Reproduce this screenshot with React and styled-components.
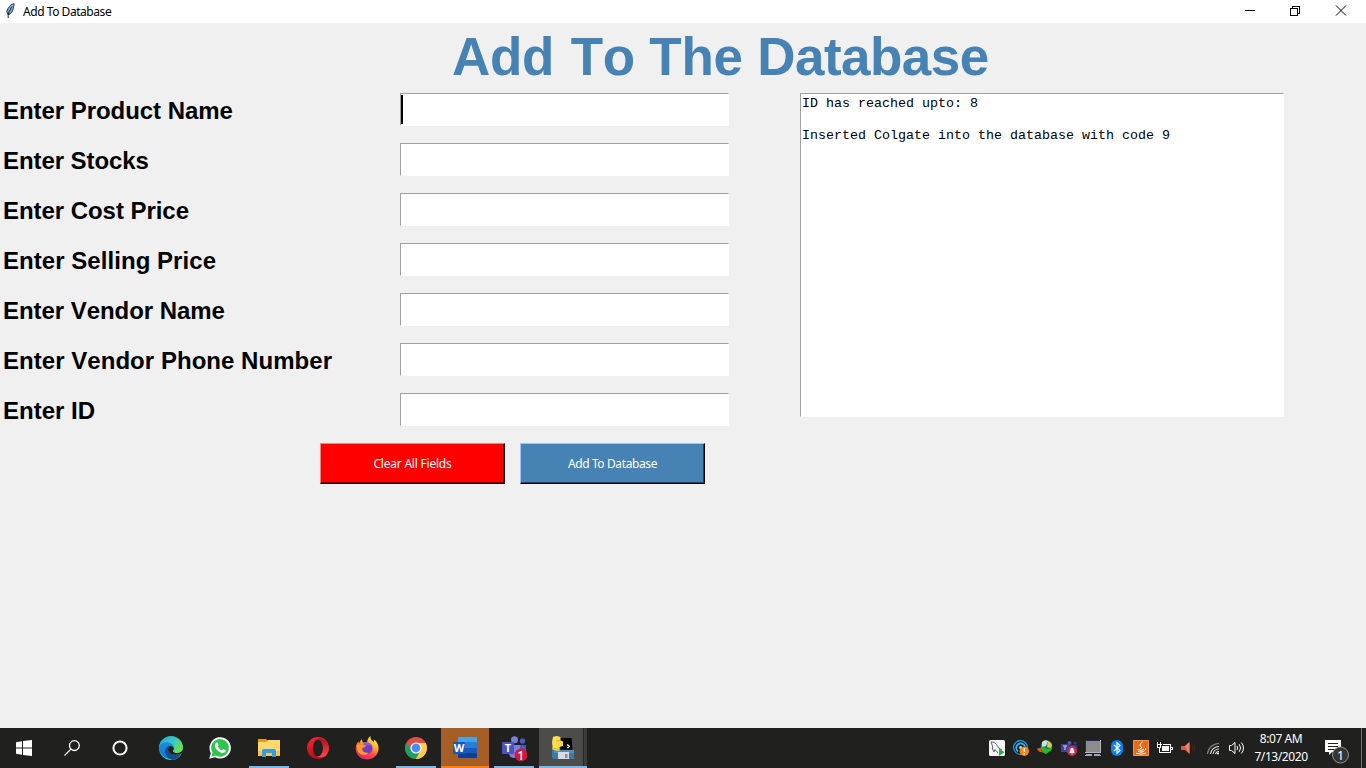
import React from "react";
import styled, { createGlobalStyle, css } from "styled-components";

const GlobalStyle = createGlobalStyle`
  * { box-sizing: border-box; }
  body { margin: 0; background: #f0f0f0; overflow: hidden; }
`;

const uiFont = css`
  font-family: "Noto Sans", "Open Sans", sans-serif;
  font-size: 12px;
`;

const Screen = styled.div`
  width: 1366px;
  height: 768px;
  display: flex;
  flex-direction: column;
  background: #f0f0f0;
`;

const TitleBar = styled.header`
  ${uiFont}
  height: 23px;
  flex: none;
  display: flex;
  background: #fff;
  color: #000;
`;

const FeatherSlot = styled.div`
  width: 23px;
  padding: 2px 0 0 4px;
  line-height: 0;
`;

const WindowTitle = styled.div`
  flex: 1;
  line-height: 23px;
  letter-spacing: -0.45px;
`;

const WindowControls = styled.div`
  display: flex;
  padding-right: 1px;
`;

const ControlButton = styled.div`
  width: ${(p) => p.$width || 48}px;
  height: 21px;
  display: flex;
  align-items: center;
  justify-content: center;
`;

const Content = styled.main`
  flex: 1;
  display: flex;
  flex-direction: column;
`;

const Heading = styled.h1`
  margin: 0;
  height: 70px;
  padding: 4px 0 0 452px;
  font: bold 53px/60px "Liberation Sans", Arial, sans-serif;
  letter-spacing: -0.27px;
  font-kerning: none;
  color: #4682b4;
  white-space: nowrap;
`;

const HeadingWord = styled.span`
  margin-right: ${(p) => p.$gap || 0}px;
  letter-spacing: ${(p) => p.$spacing || -0.27}px;
`;

const Columns = styled.div`
  display: flex;
  gap: 71px;
`;

const Form = styled.div`
  width: 729px;
`;

const FieldRow = styled.div`
  height: 50px;
  display: grid;
  grid-template-columns: 397px 329px;
  padding-left: 3px;
  align-items: start;
`;

const Label = styled.label`
  font: bold 24px/36px "Liberation Sans", Arial, sans-serif;
  font-kerning: none;
  letter-spacing: ${(p) => p.$spacing}px;
  color: #000;
  white-space: nowrap;
`;

const Entry = styled.div`
  height: 33px;
  background: #fff;
  border: 1px solid;
  border-color: #a0a0a0 #fff #fff #a0a0a0;
  padding-top: 1px;
`;

const Caret = styled.div`
  width: 2px;
  height: 29px;
  background: #000;
`;

const Output = styled.div`
  width: 484px;
  height: 324px;
  background: #fff;
  border: 1px solid;
  border-color: #a0a0a0 #fff #fff #a0a0a0;
  padding: 2px 1px;
  font: 13.333px/16px "Liberation Mono", "Courier New", monospace;
  color: #000;
  white-space: pre;
`;

const Actions = styled.div`
  display: flex;
  gap: 15px;
  padding-left: 320px;
`;

const ActionButton = styled.button`
  ${uiFont}
  width: 185px;
  height: 41px;
  padding: 0 0 1px;
  border: 1px solid;
  border-color: ${(p) => p.$light} #000 #000 ${(p) => p.$light};
  box-shadow: inset -1px -1px 0 ${(p) => p.$dark};
  background: ${(p) => p.$color};
  color: #fff;
  letter-spacing: ${(p) => p.$spacing}px;
`;

const Taskbar = styled.footer`
  ${uiFont}
  height: 40px;
  flex: none;
  display: flex;
  background: #20201f;
  color: #fff;
`;

const SystemButton = styled.div`
  width: 48px;
  height: 40px;
  display: flex;
  align-items: center;
  justify-content: center;
`;

const AppList = styled.div`
  display: flex;
  gap: 1px;
  padding-left: 3px;
`;

const appStates = {
  idle: css``,
  open: css`
    &::after { content: ""; position: absolute; left: 4px; right: 4px; bottom: 0; height: 2px; background: #76b9ed; }
  `,
  alert: css`
    background: #a75e24;
    &::after { content: ""; position: absolute; left: 0; right: 0; bottom: 0; height: 2px; background: #ff7d08; }
  `,
  active: css`
    background: linear-gradient(90deg, #4c4c4b 0 44px, #272726 44px 45px, #3d3d3c 45px);
    &::after { content: ""; position: absolute; left: 0; right: 0; bottom: 0; height: 2px; background: #76b9ed; }
  `,
};

const AppButton = styled.div`
  position: relative;
  width: 48px;
  height: 40px;
  display: flex;
  align-items: center;
  justify-content: center;
  ${(p) => appStates[p.$state]}
`;

const Tray = styled.div`
  display: flex;
  margin-left: auto;
`;

const TrayIcon = styled.div`
  width: 24px;
  height: 40px;
  display: flex;
  align-items: center;
  justify-content: center;
`;

const Clock = styled.div`
  width: 64px;
  padding-top: 2px;
  line-height: 18px;
  text-align: center;
  letter-spacing: -0.42px;
  white-space: nowrap;
`;

const Notifications = styled.div`
  width: 48px;
  height: 40px;
  padding: 10px 0 0 12px;
  line-height: 0;
`;

const DesktopEdge = styled.div`
  width: 5px;
  border-left: 1px solid #747474;
`;

const Icon = ({ size = 24, children, ...rest }) => (
  <svg width={size} height={size} viewBox={`0 0 ${size} ${size}`} {...rest}>{children}</svg>
);

const Feather = () => (
  <svg width="13" height="17" viewBox="0 0 13 17">
    <path d="M10 1.500 7 2.800 4 6.400 2.800 9.200 3.700 12.600 6 12.200 8 10 9.300 6.700 10 3Z" fill="#6fa3df" stroke="#2a3340" strokeWidth=".9" />
    <path d="M9 3 6.200 6.400 4.700 10" stroke="#b6dcff" strokeWidth=".8" fill="none" />
    <path d="M8 4.500 5.200 9.200 4.200 13.200V16" stroke="#111" strokeWidth=".9" fill="none" />
  </svg>
);

const WindowsLogo = () => (
  <Icon size={16} fill="#fff">
    <path d="M0 2.2 6 1.3V7.5H0ZM7 1.1 16 0V7.5H7ZM0 8.5H6V14.7L0 13.8ZM7 8.5H16V16L7 14.9Z" />
  </Icon>
);

const SearchIcon = () => (
  <Icon size={16} fill="none" stroke="#fff" strokeWidth="1.3">
    <circle cx="10.4" cy="5.6" r="4.9" />
    <path d="M6.9 9.1 .5 15.5" />
  </Icon>
);

const CortanaIcon = () => (
  <Icon size={16}><circle cx="8" cy="8" r="6.6" fill="none" stroke="#fff" strokeWidth="2" /></Icon>
);

const EdgeIcon = () => (
  <Icon size={24}>
    <defs>
      <linearGradient id="edgeTop" x1="0" y1="0" x2="1" y2=".45">
        <stop offset="0" stopColor="#28a9d8" /><stop offset=".55" stopColor="#35c5d0" /><stop offset="1" stopColor="#67df55" />
      </linearGradient>
      <linearGradient id="edgeBody" x1="0" y1="0" x2="0" y2="1">
        <stop offset="0" stopColor="#1a8edb" /><stop offset="1" stopColor="#1173cf" />
      </linearGradient>
    </defs>
    <circle cx="12" cy="12" r="12" fill="url(#edgeTop)" />
    <path d="M0 12C.3 7 5 5.8 8.5 6.2c4 .4 6.300 3 6.500 6-.4-1.200-1.700-2.200-3.200-2.200-2 0-3.200 1.800-3 3.700.3 3.700 4.400 6 8 5.500 2.200-.2 4-1.100 5.400-2A12 12 0 0 1 0 12Z" fill="url(#edgeBody)" />
    <path d="M11 9.700c-3 .4-5 3-4.800 6C6.500 20 10 23 13.500 23.900c3.700-.4 7-2.900 8.700-6.600.1-.5-.3-.5-.6-.3-5.800 3.200-12.200.8-12.800-3.400-.1-1.600.8-3.200 2.200-3.900Z" fill="#124d95" />
    <path d="M11.700 10c1.700 0 3.200 1.300 3.200 3 0 1-1.300 1.500-.8 2.500.8 1.600 4 1.800 6.100.9 2.200-.9 3.800-2.400 3.800-4.500v5.300l-3 .5c-5.500 2.300-11.600.2-12-4-.1-2 1-3.700 2.700-3.700Z" fill="#20201f" />
    <path d="M12 2c6 0 11.500 3.700 11.900 9.500.2 3-1.800 4.800-4.500 5.100-2.700.4-5-.5-5.300-1.700 3.200-3.500-.3-8.400-5.300-8.900C5 5.500 1.500 7 .3 10 1 5 6 2 12 2Z" fill="url(#edgeTop)" />
  </Icon>
);

const WhatsAppIcon = () => (
  <Icon size={22}>
    <path d="M.2 21.800 1.800 16A10.700 10.700 0 1 1 6.100 20.300Z" fill="#fff" />
    <path d="M2.300 19.700 3.500 15.500A8.800 8.800 0 1 1 6.600 18.500Z" fill="#2cc64f" />
    <path d="M7.500 5.500c.6-.2 1.100 0 1.300.5l.8 1.900c.1.400-.8 1.200-.8 1.600.8 1.800 2.300 3.100 4.100 3.800.5-.2 1-1.300 1.500-1.200l2 1c.4.200.4.800.1 1.500-.6 1.200-2.200 1.700-3.400 1.400C9 15 6 11.600 5.900 8.500c0-1.400.8-2.600 1.600-3Z" fill="#fff" />
  </Icon>
);

const ExplorerIcon = () => (
  <Icon size={22}>
    <path d="M0 2H8L10 4H21V8H0Z" fill="#dfa000" />
    <path d="M0 5H8L10 3H22V19H0Z" fill="#ffd86b" />
    <path d="M0 14H22V19H0Z" fill="#f4c453" />
    <path d="M4 20V14Q4 12 6 12H16Q18 12 18 14V20H14V16H8V20Z" fill="#379be0" />
  </Icon>
);

const OperaIcon = () => (
  <Icon size={22}>
    <defs>
      <linearGradient id="operaRing" x1="0" y1="0" x2=".3" y2="1"><stop stopColor="#ff2634" /><stop offset="1" stopColor="#b70b1b" /></linearGradient>
      <linearGradient id="operaSide" x1="0" y1="0" x2="0" y2="1"><stop stopColor="#a90f1d" /><stop offset="1" stopColor="#ff4b50" /></linearGradient>
    </defs>
    <path fillRule="evenodd" d="M11 0a11 11 0 1 0 0 22a11 11 0 1 0 0-22ZM11 2.500C14 2.500 16 6.500 16 11S14 19.500 11 19.500 6 15.500 6 11 8 2.500 11 2.500Z" fill="url(#operaRing)" />
    <path d="M8.800 3C12.500 0 17 2 19 4.500 23.500 9 22.500 15 18.500 19 15.500 20.500 12 21 9.200 19.200 13.500 20.500 16 16 16 11S13.500 1.500 8.800 3Z" fill="url(#operaSide)" />
  </Icon>
);

const FirefoxIcon = () => (
  <Icon size={24}>
    <defs>
      <linearGradient id="fox" x1=".8" y1="0" x2=".3" y2="1">
        <stop stopColor="#fff04a" /><stop offset=".35" stopColor="#ffb52f" /><stop offset=".65" stopColor="#ff5038" /><stop offset="1" stopColor="#e91a7a" />
      </linearGradient>
    </defs>
    <path d="M15.500 0c-.5 3 1 4 3.200 6 .3-1.200.3-1.800.1-2.500C22 5.500 24 9.200 23.500 13.500 22.800 19.500 18 23.500 12 23.500S1 19 .7 13C.5 9.700 2 7 3.600 5.200L4 7.500 6.500 3 8 6.700c2-.5 3-.3 4-.1.200-2.600 1.300-5 3.500-6.600Z" fill="url(#fox)" />
    <circle cx="12.200" cy="12.600" r="5.300" fill="#753bc6" />
    <path d="M1.500 9C5 7.500 7.500 9.200 10.500 9.300c1.100.1.500 1.400-1 2-1 .4-2.200.5-2.300 2 0 2.500 3.200 4.300 6.300 3.200C10.500 21 3 18.500 2 13Z" fill="#ff9f26" />
    <path d="M8 6.700c4-1.700 8.500.2 9.800 4-1.700-1.500-3-1.500-4.500-1.400L10.500 9.300Z" fill="#9657da" />
  </Icon>
);

const ChromeIcon = () => (
  <Icon size={24}>
    <circle cx="12" cy="12" r="11" fill="#dd5144" />
    <path d="M12 7H21.800A11 11 0 0 1 11.700 23L16.300 14.500Z" fill="#ffcd46" />
    <path d="M2.300 6.800A11 11 0 0 0 11.700 23L16.300 14.500 7.700 14.500Z" fill="#1aa15f" />
    <circle cx="12" cy="12" r="5.600" fill="#fff" />
    <circle cx="12" cy="12" r="4.400" fill="#4c8bf5" />
  </Icon>
);

const WordIcon = () => (
  <Icon size={24}>
    <path d="M6 1H23Q24 1 24 2V7H5V2Q5 1 6 1Z" fill="#41a5ee" />
    <path d="M5 6H24V12H5Z" fill="#2b7cd3" />
    <path d="M5 12H24V17H5Z" fill="#185abd" />
    <path d="M5 17H24V21Q24 22 23 22H6Q5 22 5 21Z" fill="#103f91" />
    <rect y="6" width="12" height="12" rx="1" fill="#185abd" />
    <text x="6" y="16" textAnchor="middle" fill="#fff" fontFamily="Open Sans, sans-serif" fontWeight="700" fontSize="11">W</text>
  </Icon>
);

const TeamsIcon = () => (
  <svg width="26" height="34" viewBox="0 -4 26 34">
    <circle cx="13.500" cy="4.800" r="3.500" fill="#7980dd" /><circle cx="21.500" cy="6" r="2.700" fill="#5058bb" />
    <path d="M17 10H25V16Q25 21 20 21H17Z" fill="#5058bb" />
    <path d="M8 10H19V18Q19 23 13.500 23T8 18Z" fill="#7980dd" />
    <rect x="1" y="7" width="12" height="12" rx="1" fill="#4b53bc" />
    <text x="7" y="16.900" textAnchor="middle" fill="#fff" fontFamily="Open Sans, sans-serif" fontWeight="700" fontSize="11">T</text>
    <circle cx="20" cy="20" r="6.500" fill="#d0193c" />
    <text x="19.900" y="24.500" textAnchor="middle" fill="#fff" fontFamily="Noto Sans, sans-serif" fontWeight="500" fontSize="12.500">1</text>
  </svg>
);

const PythonIcon = () => (
  <Icon size={24}>
    <path d="M1 12 3 14H23V23H2L1 21Z" fill="#397ba9" />
    <path d="M3 14H23V17H3Z" fill="#4c92c3" />
    <path d="M7 16H18V23H7Z" fill="#d8dce0" /><rect x="14" y="18" width="2.500" height="4" fill="#8b9096" />
    <path d="M8 1.500H21L22 14H9Z" fill="#050505" stroke="#777" strokeWidth=".4" />
    <path d="m16 8.500 2.500 1.700-2.200 2" stroke="#fff" strokeWidth="1.100" fill="none" />
    <path d="M2 .8 6 0 9.500 1V4.500L12 5.500V10L8.500 11V15L5 14.500 1.500 13.500V10L1 6Z" fill="#ffdb4a" />
    <path d="M5.500 4.800H9.500M3 12.300 7.500 13.300" stroke="#dda923" strokeWidth=".9" /><circle cx="4.500" cy="3" r=".6" fill="#fff6bb" />
  </Icon>
);

const MySqlIcon = () => (
  <Icon size={16}>
    <rect width="16" height="16" rx="1.500" fill="#f5f5f5" />
    <path d="M2 2C5 1.500 8 4 9.500 8L13 10M2 2C3 5 4 6 3.500 9L5 12 6 9.500 9 13" fill="none" stroke="#59666f" strokeWidth="1" />
    <path d="M10 8.500 15.500 12.300 10 16Z" fill="#20b14b" />
  </Icon>
);

const SyncIcon = () => (
  <Icon size={16}>
    <circle cx="7.500" cy="7.500" r="6.900" fill="#061d2c" stroke="#1ba7e5" strokeWidth="1.200" />
    <path d="M5 11.500A4.500 4.500 0 1 1 12 6.500" fill="none" stroke="#27b9f4" strokeWidth="1.700" />
    <circle cx="7.600" cy="7.600" r="1.500" fill="#9deaff" />
    <circle cx="11.300" cy="11.300" r="4.700" fill="#ff850a" />
    <path d="M11.300 8.200V12M11.300 13V14.500" stroke="#fff" strokeWidth="1.400" />
  </Icon>
);

const IdmIcon = () => (
  <Icon size={16}>
    <circle cx="9.500" cy="6" r="5.800" fill="#2867a9" />
    <path d="M5 2Q8-1 11 1L9 6 5 7Z" fill="#c3e8da" /><path d="M11 .8Q14 2 15 5L14 8 10 7Z" fill="#d9d43b" />
    <path d="M3 8 6 6.500 9.500 9 15.500 7.500 14 10.500 9 14 6 12.500Z" fill="#25bb18" />
    <path d="M0 9Q3 7 6 8L3.500 9.500 6 12.500Q1 12 0 9Z" fill="#e5572d" />
  </Icon>
);

const TeamsTrayIcon = () => (
  <Icon size={16}>
    <circle cx="8.500" cy="3" r="2" fill="#535ab6" /><circle cx="14" cy="3" r="1.500" fill="#343b8e" />
    <path d="M6 5H16V12H6Z" fill="#343b8e" /><rect y="4" width="8" height="8" fill="#3d4598" />
    <path d="M2 6H6M4 6V10" stroke="#cfd2ff" />
    <circle cx="11" cy="11" r="5" fill="#ce2948" /><path d="M8.500 13V12L9.300 11V9.500a1.700 1.700 0 0 1 3.400 0V11l.8 1v1ZM10.300 13.500h1.400V14.300h-1.400Z" fill="#fff" />
  </Icon>
);

const MonitorIcon = () => (
  <Icon size={16} shapeRendering="crispEdges">
    <rect width="16" height="13" fill="#b6b6b6" /><rect x="1" y="1" width="14" height="11" fill="#8c8c8c" />
    <path d="M.5 12V.5H15" fill="none" stroke="#242478" /><path d="M1 14H7V16H0ZM9 14H14L16 16H9Z" fill="#9baac2" />
  </Icon>
);

const BluetoothIcon = () => (
  <Icon size={16}>
    <rect x="2" width="12" height="16" rx="6" fill="#0883ef" />
    <path d="m5 5 6 5.500-3 2.700V2.800l3 2.700L5 11" fill="none" stroke="#fff" strokeWidth="1.100" />
  </Icon>
);

const JavaIcon = () => (
  <Icon size={16}>
    <rect width="16" height="16" rx="1" fill="#e46a18" /><path d="M.5 .5H15.500V15.500H.5Z" fill="none" stroke="#f19a50" />
    <path d="M9.500 2Q5.500 4.500 8 6.500T7 8.500M4.500 9.500Q8 11 11 9.500M12 8.500Q14.500 8.500 11.500 10.500M5 11.500Q8 12.700 11 11.500M3 13.300Q8 14.700 13 13.200" fill="none" stroke="#fff" strokeWidth="1" />
  </Icon>
);

const BatteryIcon = () => (
  <Icon size={16} fill="none" stroke="#fff" shapeRendering="crispEdges">
    <path d="M.5 2V4M3.500 2V4M0 4.500H5M.5 5V7.500H3.500V5M2.500 8V12.500H13.500V4.500H6" /><path d="M14 7.500H15.500V9.500H14" /><path d="M5 8.500H12" strokeWidth="5" />
  </Icon>
);

const AudioIcon = () => (
  <Icon size={16}>
    <path d="M0 6H4L8.500 2V14L4 10H0Z" fill="#d85a43" /><path d="M4 6 8.500 2V14L6.500 11Z" fill="#ef8267" />
    <path d="M11 5Q12.500 8 11 11M13 4Q15 8 13 12" fill="none" stroke="#4a211b" />
  </Icon>
);

const WifiIcon = () => (
  <Icon size={16} fill="none" strokeWidth="1.100">
    <path d="M2.500 14A11.500 11.500 0 0 1 14 3.500" stroke="#868686" /><path d="M5.500 14A8.500 8.500 0 0 1 14 6.500M8 14A6 6 0 0 1 14 9M10.500 14A3.500 3.500 0 0 1 14 11.500" stroke="#e2e2e2" />
    <circle cx="13" cy="13.500" r="1" fill="#fff" />
  </Icon>
);

const VolumeIcon = () => (
  <svg width="18" height="16" viewBox="0 0 18 16" fill="none" stroke="#fff">
    <path d="M1.500 5.500H3.500L7 2.500V13.500L3.500 10.500H1.500ZM9 6Q10.500 8 9 10M11.200 4.200Q14 8 11.200 11.800M13.400 2.500Q17.600 8 13.400 13.500" />
  </svg>
);

const NotificationIcon = () => (
  <svg width="26" height="27" viewBox="0 0 26 27">
    <path d="M0 2H16V14H7L4 17V14H0Z" fill="#fff" />
    <path d="M3 5.500H13M3 8.500H13M3 11.500H10" stroke="#20201f" />
    <circle cx="15.500" cy="17" r="8" fill="#353535" stroke="#929292" />
    <text x="15.500" y="21.500" textAnchor="middle" fill="#fff" fontFamily="Noto Sans, sans-serif" fontSize="12.500">1</text>
  </svg>
);

const fields = [
  { name: "Enter Product Name", spacing: -0.05 },
  { name: "Enter Stocks", spacing: -0.07 },
  { name: "Enter Cost Price", spacing: -0.05 },
  { name: "Enter Selling Price", spacing: 0.05 },
  { name: "Enter Vendor Name", spacing: -0.05 },
  { name: "Enter Vendor Phone Number", spacing: 0.04 },
  { name: "Enter ID", spacing: 0 },
];
const apps = [
  [EdgeIcon, "idle"], [WhatsAppIcon, "idle"], [ExplorerIcon, "open"], [OperaIcon, "idle"], [FirefoxIcon, "idle"],
  [ChromeIcon, "open"], [WordIcon, "alert"], [TeamsIcon, "open"], [PythonIcon, "active"],
];
const trayIcons = [MySqlIcon, SyncIcon, IdmIcon, TeamsTrayIcon, MonitorIcon, BluetoothIcon, JavaIcon, BatteryIcon, AudioIcon, WifiIcon, VolumeIcon];

export default function App() {
  return (
    <>
      <GlobalStyle />
      <Screen>
        <TitleBar>
          <FeatherSlot><Feather /></FeatherSlot>
          <WindowTitle>Add To Database</WindowTitle>
          <WindowControls>
            <ControlButton $width={45}><svg width="12" height="12" viewBox="0 0 12 12" shapeRendering="crispEdges"><path d="M1 5.500H11" stroke="#000" /></svg></ControlButton>
            <ControlButton $width={45}><svg width="12" height="12" viewBox="0 0 12 12" fill="none" stroke="#000" shapeRendering="crispEdges"><path d="M1.500 3.500H8.500V10.500H1.500ZM3.500 3V1.500H10.500V8.500H9" /></svg></ControlButton>
            <ControlButton><svg width="12" height="12" viewBox="0 0 12 12"><path d="M1 .5 11 10.500M11 .5 1 10.500" stroke="#000" /></svg></ControlButton>
          </WindowControls>
        </TitleBar>
        <Content>
          <Heading>
            <HeadingWord $gap={2}>Add</HeadingWord> To The <HeadingWord $spacing={-0.52}>Database</HeadingWord>
          </Heading>
          <Columns>
            <Form>
              {fields.map(({ name, spacing }, i) => (
                <FieldRow key={name}>
                  <Label $spacing={spacing}>{name}</Label>
                  <Entry>{i === 0 && <Caret />}</Entry>
                </FieldRow>
              ))}
            </Form>
            <Output>{"ID has reached upto: 8\n\nInserted Colgate into the database with code 9"}</Output>
          </Columns>
          <Actions>
            <ActionButton $color="#ff0000" $light="#ff7f7f" $dark="#800000" $spacing={-0.22}>Clear All Fields</ActionButton>
            <ActionButton $color="#4682b4" $light="#9fc4ff" $dark="#23415a" $spacing={-0.38}>Add To Database</ActionButton>
          </Actions>
        </Content>
        <Taskbar>
          <SystemButton><WindowsLogo /></SystemButton>
          <SystemButton><SearchIcon /></SystemButton>
          <SystemButton><CortanaIcon /></SystemButton>
          <AppList>
            {apps.map(([AppIcon, state], i) => <AppButton key={i} $state={state}><AppIcon /></AppButton>)}
          </AppList>
          <Tray>
            {trayIcons.map((Glyph, i) => <TrayIcon key={i}><Glyph /></TrayIcon>)}
            <Clock>8:07 AM<br />7/13/2020</Clock>
            <Notifications><NotificationIcon /></Notifications>
            <DesktopEdge />
          </Tray>
        </Taskbar>
      </Screen>
    </>
  );
}
